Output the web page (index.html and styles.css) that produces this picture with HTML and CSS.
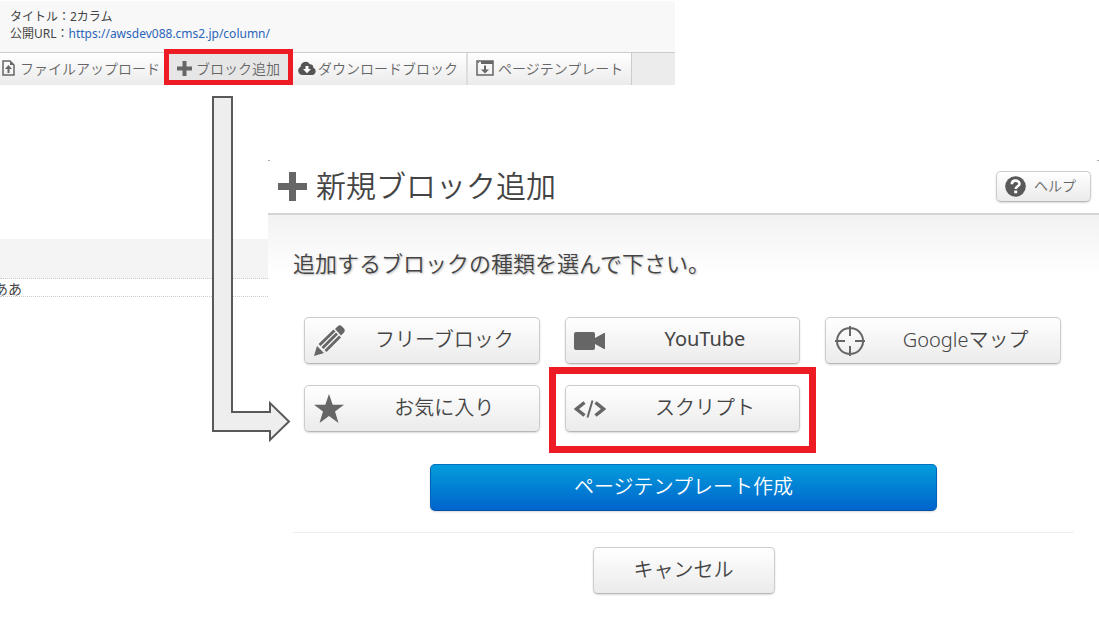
FILE: index.html
```html
<!DOCTYPE html>
<html lang="ja">
<head>
  <meta charset="utf-8">
  <title>新規ブロック追加</title>
  <link rel="stylesheet" href="styles.css">
</head>
<body>
  <header class="page-header">
    <div class="page-info">
      <div>タイトル：2カラム</div>
      <div>公開URL：<a href="#">https://awsdev088.cms2.jp/column/</a></div>
    </div>
    <nav class="toolbar">
      <button class="tool upload">
        <svg width="13" height="16" viewBox="0 0 13 16"><path d="M1 1h7l4 4v10H1z" fill="none" stroke="#666" stroke-width="1.5"/><path d="M8 1v4h4M6.500 5L10 9H7.500v4h-2V9H3z" fill="#666"/></svg>
        ファイルアップロード
      </button>
      <button class="tool add">
        <svg width="15" height="15" viewBox="0 0 15 15"><path d="M5.500 0h4v5.500H15v4H9.500V15h-4V9.500H0v-4h5.500z" fill="#666"/></svg>
        ブロック追加
      </button>
      <button class="tool download">
        <svg width="18" height="14" viewBox="0 0 18 14"><path d="M4.500 14A4.400 4.400 0 0 1 2.600 5.700 5 5 0 0 1 11.800 3.200 3.200 3.200 0 0 1 15.300 6.700 3.800 3.800 0 0 1 14.200 14z" fill="#555"/><path d="M7.500 5h3v3h2.500L9 12.300 5 8h2.500z" fill="#fff"/></svg>
        ダウンロードブロック
      </button>
      <button class="tool template">
        <svg width="18" height="16" viewBox="0 0 18 16"><path d="M1 1h16v14H1z" fill="none" stroke="#666" stroke-width="1.500"/><path d="M5 1h12v3H5zM2 2h1v1H2zM8 5.500h2v4h3L9 13.500 5 9.500h3z" fill="#666"/></svg>
        ページテンプレート
      </button>
    </nav>
  </header>

  <div class="content">
    <main class="preview">
      <div class="band"></div>
      <p class="sample">ああ</p>
    </main>

    <section class="dialog">
      <div class="dialog-header">
        <svg width="29" height="29" viewBox="0 0 29 29"><path d="M11 0h7v11h11v7H18v11h-7V18H0v-7h11z" fill="#666"/></svg>
        <h1>新規ブロック追加</h1>
        <button class="btn help">
          <svg width="21" height="21" viewBox="0 0 21 21"><circle cx="10.500" cy="10.500" r="10.300" fill="#595959"/><path d="M6.800 8.200C6.800 3.500 14.500 3.500 14.500 7.900C14.500 10.300 10.700 10.300 10.700 13" fill="none" stroke="#fff" stroke-width="2.600"/><path d="M9.200 14.500h3v2.800h-3z" fill="#fff"/></svg>
          <span>ヘルプ</span>
        </button>
      </div>
      <div class="dialog-body">
        <h2>追加するブロックの種類を選んで下さい。</h2>
        <div class="blocks">
          <button class="btn block">
            <svg width="32" height="32" viewBox="0 0 32 32"><g fill="#666"><path d="M1 31l3-10 7 7zM22 4l3-3q2-1.500 4 .5l2 2q1.500 2 0 4l-3 3z"/><path d="M5.500 19L20.500 4.500l2 2L7.500 21zM8.500 22L23 7.500l2 2L10.500 24zM11.500 25L26 10.500l2 2L13.500 27z"/></g></svg>
            <span>フリーブロック</span>
          </button>
          <button class="btn block">
            <svg width="32" height="32" viewBox="0 0 32 32"><path d="M2 7h17q2 0 2 2v4l9-5h1v16h-1l-9-5v4q0 2-2 2H2q-2 0-2-2V9q0-2 2-2z" fill="#666"/></svg>
            <span class="latin">YouTube</span>
          </button>
          <button class="btn block">
            <svg width="32" height="32" viewBox="0 0 32 32"><path d="M16 3a13 13 0 1 0 .1 0zM16 1v10M16 21v10M1 16h10M21 16h10" fill="none" stroke="#666" stroke-width="2"/></svg>
            <span>Googleマップ</span>
          </button>
          <button class="btn block">
            <svg width="32" height="32" viewBox="0 0 32 32"><path d="M16 1l3.700 10.700H31l-9 6.800L25.500 30 16 23 6.500 30 10 18.500 1 11.700h11.300z" fill="#666"/></svg>
            <span>お気に入り</span>
          </button>
          <button class="btn block script">
            <svg width="32" height="32" viewBox="0 0 32 32"><path d="M10.500 9.500L2.500 16l8 6.500M21.500 9.500l8 6.500-8 6.500" fill="none" stroke="#666" stroke-width="3.500"/><path d="M18.500 7.500l-5 17" stroke="#666" stroke-width="2"/></svg>
            <span>スクリプト</span>
          </button>
        </div>
        <button class="btn primary"><span>ページテンプレート作成</span></button>
        <hr>
        <button class="btn cancel"><span>キャンセル</span></button>
      </div>
    </section>
  </div>

  <!-- arrow from the toolbar to the dialog -->
  <svg class="arrow" width="80" height="348" viewBox="0 0 80 348"><path d="M2 2h19v315h38v-9l19 18.500L59 345v-9H2z" fill="#eee" stroke="#595959" stroke-width="2"/></svg>
</body>
</html>
```

FILE: styles.css
```css
* {
  box-sizing: border-box;
}
body {
  position: relative;
  margin: 0;
  background: #fff;
  color: #444;
  font-family: "Noto Sans", "Noto Sans CJK JP", sans-serif;
  overflow-x: hidden;
}
button {
  font-family: inherit;
  color: inherit;
  cursor: pointer;
}
svg {
  display: block;
  flex: none;
}

/* page header */
.page-header {
  max-width: 675px;
  padding-top: 1px;
}
.page-info {
  height: 51px;
  padding: 7px 10px;
  background: #f8f8f8;
  font-size: 12px;
  line-height: 17px;
}
.page-info a {
  color: #2a65b8;
  text-decoration: none;
}
.toolbar {
  display: flex;
  height: 33px;
  border-top: 1px solid #ccc;
  background: #ececec;
}
.tool {
  position: relative;
  display: flex;
  align-items: center;
  gap: 4px;
  padding: 0 8px 2px 4px;
  border: 0;
  background: linear-gradient(#fff, #ebebeb);
  color: #666;
  font-size: 14px;
  font-weight: 350;
  white-space: nowrap;
}
.upload {
  gap: 5px;
  padding-right: 7px;
  padding-left: 2px;
}
.add {
  z-index: 1;
  padding-left: 10px;
  background: #e6e6e6;
}
.download {
  gap: 2px;
  padding-left: 10px;
  border-right: 2px solid #ddd;
}
.template {
  padding-left: 8px;
  border-right: 1px solid #ccc;
}

/* red frames */
.add::after,
.script::after {
  content: "";
  position: absolute;
  border: 5px solid #ed1c24;
}
.add::after {
  inset: -4px -5px 0 -3px;
}
.script::after {
  inset: -19px -17px -22px;
  border-width: 7px;
}

/* page behind the dialog */
.content {
  display: flex;
}
.preview {
  width: 268px;
  flex: none;
  padding-top: 154px;
}
.band {
  height: 40px;
  background: #f4f4f4;
  border-bottom: 1px dotted #ccc;
}
.sample {
  margin: 0;
  border-bottom: 1px dotted #ccc;
  font-size: 14px;
  line-height: 17px;
  text-indent: -6px;
  padding-top: 1px;
  height: 18px;
}

/* dialog */
.dialog {
  flex: 1;
  margin-top: 75px;
}
.dialog-header {
  position: relative;
  display: flex;
  align-items: center;
  gap: 9px;
  height: 55px;
  padding: 0 8px 0 10px;
  border-bottom: 2px solid #d4d4d4;
}
.dialog-header::before,
.dialog-header::after {
  content: "";
  position: absolute;
  top: 0;
  left: 0;
  width: 2px;
  height: 1px;
  background: #aaa;
}
.dialog-header::after {
  left: auto;
  right: 0;
}
h1 {
  flex: 1;
  margin: 0;
  padding-bottom: 2px;
  font-size: 30px;
  font-weight: 350;
  line-height: 40px;
}
.dialog-body {
  padding: 31px 25px;
  background: linear-gradient(#f2f2f2, #fff 60px);
}
h2 {
  margin: 0 0 37px;
  font-size: 22px;
  font-weight: 350;
  line-height: 34px;
  text-shadow: 1px 1px 2px #bbb;
}
.btn {
  display: block;
  height: 47px;
  border: 1px solid #ccc;
  border-bottom-color: #b8b8b8;
  border-radius: 5px;
  background: linear-gradient(#fff, #ebebeb);
  box-shadow: 0 1px 2px rgba(0, 0, 0, 0.15);
  font-size: 20px;
  font-weight: 350;
}
.btn span {
  display: block;
  padding-bottom: 4px;
}
.help {
  display: flex;
  align-items: center;
  gap: 8px;
  height: 31px;
  padding: 0 14px 0 8px;
  color: #666;
  font-size: 14px;
}
.blocks {
  display: grid;
  grid-template-columns: repeat(3, 1fr);
  gap: 21px 25px;
  padding: 0 13px 0 11px;
}
.block {
  position: relative;
  display: flex;
  align-items: center;
  gap: 13px;
  padding: 0 8px;
}
.block span {
  flex: 1;
  text-align: center;
}
.block .latin {
  font-weight: 400;
}
.primary {
  width: 65%;
  margin: 32px auto 21px;
  border-color: #0070c0 #0062b8 #0050a8;
  background: linear-gradient(#049cdb, #0064cd);
  color: #fff;
}
hr {
  margin: 0 0 14px;
  border: 0;
  border-top: 1px solid #eee;
}
.cancel {
  width: 182px;
  margin: 0 auto;
}

.arrow {
  position: absolute;
  top: 95px;
  left: 211px;
}
```
